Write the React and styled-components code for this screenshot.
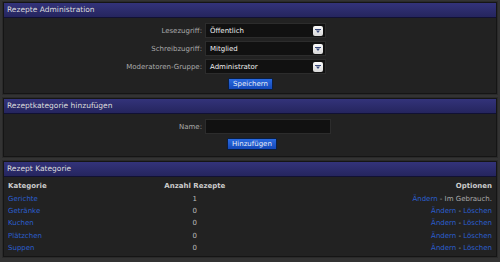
import styled, { createGlobalStyle } from "styled-components";

const GlobalStyle = createGlobalStyle`
  html, body {
    margin: 0;
    background: #333;
  }
  body {
    font-family: "DejaVu Sans", Verdana, sans-serif;
    font-size: 7px;
    color: #ccc;
  }
`;

const categories = [
  { name: "Gerichte", count: 1, inUse: true },
  { name: "Getränke", count: 0 },
  { name: "Kuchen", count: 0 },
  { name: "Plätzchen", count: 0 },
  { name: "Suppen", count: 0 },
];

const Arrow = () => (
  <ArrowBox>
    <svg width="6" height="4" viewBox="0 0 6 4">
      <rect x="0" y="0" width="6" height="1" fill="#3a4a7a" />
      <polygon points="1,1.5 5,1.5 3,4" fill="#3a4a7a" />
    </svg>
  </ArrowBox>
);

const Select = ({ value }) => (
  <SelectBox>
    <span>{value}</span>
    <Arrow />
  </SelectBox>
);

const App = () => {
  return (
    <>
      <GlobalStyle />
      <Page>
        <Panel>
          <Header>Rezepte Administration</Header>
          <FormBody $bottom={3}>
            <Label>Lesezugriff:</Label>
            <Select value="Öffentlich" />
            <Label>Schreibzugriff:</Label>
            <Select value="Mitglied" />
            <Label>Moderatoren-Gruppe:</Label>
            <Select value="Administrator" />
            <span />
            <ButtonCell>
              <Button $ml={23}>Speichern</Button>
            </ButtonCell>
          </FormBody>
        </Panel>

        <Panel>
          <Header>Rezeptkategorie hinzufügen</Header>
          <FormBody $bottom={6}>
            <Label>Name:</Label>
            <Input />
            <span />
            <ButtonCell>
              <Button $ml={22}>Hinzufügen</Button>
            </ButtonCell>
          </FormBody>
        </Panel>

        <Panel>
          <Header>Rezept Kategorie</Header>
          <TableBody>
            <Table>
              <thead>
                <tr>
                  <Th>Kategorie</Th>
                  <Th $align="center">Anzahl Rezepte</Th>
                  <Th $align="right">Optionen</Th>
                </tr>
              </thead>
              <tbody>
                {categories.map((c) => (
                  <tr key={c.name}>
                    <Td>
                      <Link>{c.name}</Link>
                    </Td>
                    <Td $align="center">{c.count}</Td>
                    <Td $align="right">
                      <Link>Ändern</Link>
                      <Sep> - </Sep>
                      {c.inUse ? <Plain>Im Gebrauch.</Plain> : <Link>Löschen</Link>}
                    </Td>
                  </tr>
                ))}
              </tbody>
            </Table>
          </TableBody>
        </Panel>
      </Page>
    </>
  );
};

const Page = styled.div`
  padding: 2px 3px;
  display: flex;
  flex-direction: column;
  gap: 4px;
`;
const Panel = styled.div`
  background: #222;
  border: 1px solid #151515;
  box-shadow: 0 0 0 1px #2a2a2a;
`;
const Header = styled.div`
  height: 14px;
  line-height: 14px;
  padding-left: 3px;
  background: linear-gradient(#33337a, #25255e);
  border-bottom: 1px solid #111133;
  color: #ddd;
  font-size: 7.5px;
`;
const FormBody = styled.div`
  display: grid;
  grid-template-columns: 198px auto;
  column-gap: 3px;
  row-gap: 3px;
  align-items: center;
  padding: 5px 0 ${(p) => p.$bottom}px;
`;
const Label = styled.div`
  text-align: right;
  color: #aaa;
`;
const SelectBox = styled.div`
  width: 121px;
  height: 15px;
  box-sizing: border-box;
  background: #111;
  border: 1px solid #2c2c2c;
  display: flex;
  align-items: center;
  justify-content: space-between;
  padding: 0 2px 0 4px;
  color: #eee;
`;
const ArrowBox = styled.div`
  width: 10px;
  height: 10px;
  background: linear-gradient(#fafafa, #d8d8d8);
  border-radius: 2px;
  display: flex;
  align-items: center;
  justify-content: center;
`;
const Input = styled.div`
  width: 126px;
  height: 15px;
  box-sizing: border-box;
  background: #111;
  border: 1px solid #2c2c2c;
`;
const ButtonCell = styled.div`
  display: flex;
  padding-top: 1px;
`;
const Button = styled.button`
  margin-left: ${(p) => p.$ml}px;
  height: 12px;
  padding: 0 4px;
  font-family: inherit;
  font-size: 7px;
  line-height: 10px;
  color: #e8eef8;
  background: linear-gradient(#2a6ae0, #1448b8);
  border: 1px solid #0a1e40;
  border-radius: 1px;
`;
const TableBody = styled.div`
  padding: 3px 4px 2px;
`;
const Table = styled.table`
  width: 100%;
  border-collapse: collapse;
`;
const Th = styled.th`
  text-align: ${(p) => p.$align || "left"};
  color: #ccc;
  font-weight: bold;
  height: 12.4px;
  padding: 0;
`;
const Td = styled.td`
  text-align: ${(p) => p.$align || "left"};
  color: #bbb;
  height: 12.4px;
  padding: 0;
`;
const Link = styled.span`
  color: #2b5fd0;
`;
const Sep = styled.span`
  color: #aaa;
`;
const Plain = styled.span`
  color: #aaa;
`;

export default App;
